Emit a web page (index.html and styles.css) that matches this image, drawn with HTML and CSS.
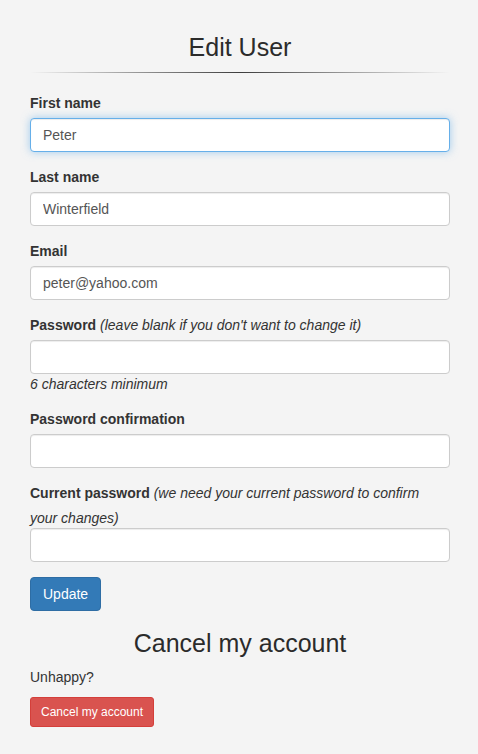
FILE: index.html
```html
<!DOCTYPE html>
<html>
<head>
<meta charset="utf-8">
<link rel="stylesheet" href="styles.css">
</head>
<body>
<div class="container">
  <h2 class="title">Edit User</h2>
  <hr class="fade-rule">
  <form class="edit-form">
    <div class="form-group">
      <label>First name</label>
      <input class="form-control focused" type="text" value="Peter">
    </div>
    <div class="form-group">
      <label>Last name</label>
      <input class="form-control" type="text" value="Winterfield">
    </div>
    <div class="form-group">
      <label>Email</label>
      <input class="form-control" type="email" value="peter@yahoo.com">
    </div>
    <div class="form-group">
      <label>Password</label> <i>(leave blank if you don't want to change it)</i><br>
      <input class="form-control" type="password">
      <em class="help">6 characters minimum</em>
    </div>
    <div class="form-group">
      <label>Password confirmation</label>
      <input class="form-control" type="password">
    </div>
    <div class="form-group">
      <label>Current password</label> <i>(we need your current password to confirm your changes)</i><br>
      <input class="form-control" type="password">
    </div>
    <div class="actions">
      <button type="button" class="btn btn-primary">Update</button>
    </div>
  </form>
  <h3 class="title cancel-title">Cancel my account</h3>
  <p class="unhappy">Unhappy?</p>
  <button type="button" class="btn btn-sm btn-danger">Cancel my account</button>
</div>
</body>
</html>
```
FILE: styles.css
```css
* { box-sizing: border-box; }
html, body {
  margin: 0;
  background: #f4f4f4;
}
body {
  font-family: "Liberation Sans", Arial, Helvetica, sans-serif;
  font-size: 14px;
  line-height: 1.42857143;
  color: #333;
}
.container {
  padding: 0 28px 0 30px;
}
.title {
  font-size: 25px;
  font-weight: 500;
  line-height: 1.1;
  text-align: center;
  margin: 34px 0 10px;
  color: #2b2b2b;
}
.fade-rule {
  border: 0;
  height: 1px;
  margin: 0 0 20px;
  background-image: linear-gradient(to right, rgba(0,0,0,0), rgba(0,0,0,0.75), rgba(0,0,0,0));
}
.form-group {
  margin-bottom: 15px;
}
label {
  display: inline-block;
  max-width: 100%;
  margin-bottom: 5px;
  font-weight: bold;
}
.form-control {
  display: block;
  width: 100%;
  height: 34px;
  padding: 6px 12px;
  font-family: inherit;
  font-size: 14px;
  line-height: 1.42857143;
  color: #555;
  background-color: #fff;
  border: 1px solid #ccc;
  border-radius: 4px;
  box-shadow: inset 0 1px 1px rgba(0,0,0,0.075);
  outline: none;
  margin: 0;
}
.form-control.focused {
  border-color: #66afe9;
  box-shadow: inset 0 1px 1px rgba(0,0,0,0.075), 0 0 8px rgba(102,175,233,0.6);
}
.help {
  display: block;
}
.btn {
  display: inline-block;
  padding: 6px 12px;
  margin: 0;
  font-family: inherit;
  font-size: 14px;
  line-height: 1.42857143;
  border: 1px solid transparent;
  border-radius: 4px;
  color: #fff;
  cursor: pointer;
}
.btn-primary {
  background-color: #337ab7;
  border-color: #2e6da4;
}
.btn-sm {
  padding: 5px 10px;
  font-size: 12px;
  line-height: 1.5;
  border-radius: 3px;
}
.btn-danger {
  background-color: #d9534f;
  border-color: #d43f3a;
}
.cancel-title {
  margin: 19px 0 10px;
}
.unhappy {
  margin: 0 0 10px;
}
```
